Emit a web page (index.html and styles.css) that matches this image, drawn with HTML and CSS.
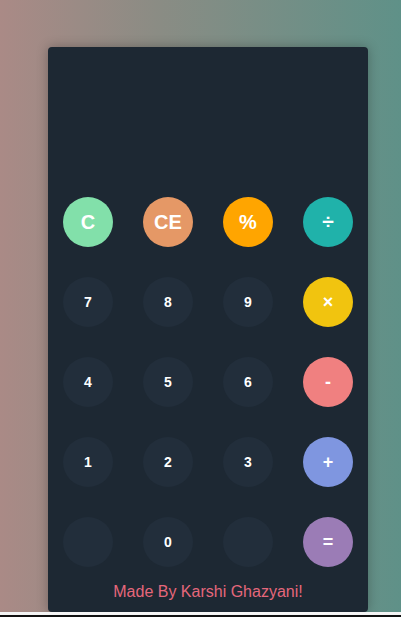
FILE: index.html
```html
<!DOCTYPE html>
<html>
<head>
<meta charset="utf-8">
<link rel="stylesheet" href="styles.css">
</head>
<body>
<div class="page">
  <div class="calc">
    <div class="display"></div>
    <div class="keys">
      <button class="key big c">C</button>
      <button class="key big ce">CE</button>
      <button class="key big pct">%</button>
      <button class="key op div">÷</button>
      <button class="key num">7</button>
      <button class="key num">8</button>
      <button class="key num">9</button>
      <button class="key op mul">×</button>
      <button class="key num">4</button>
      <button class="key num">5</button>
      <button class="key num">6</button>
      <button class="key op sub">-</button>
      <button class="key num">1</button>
      <button class="key num">2</button>
      <button class="key num">3</button>
      <button class="key op add">+</button>
      <button class="key num"></button>
      <button class="key num">0</button>
      <button class="key num"></button>
      <button class="key op eq">=</button>
    </div>
    <div class="credit">Made By Karshi Ghazyani!</div>
  </div>
</div>
<div class="strip"></div>
<div class="edge"></div>
</body>
</html>
```
FILE: styles.css
```css
html, body {
  margin: 0;
  padding: 0;
  background: #ffffff;
  overflow: hidden;
}
.page {
  height: 612px;
  background: linear-gradient(to right, #aa8a86 0%, #8a8c84 40%, #5f9188 100%);
  padding-top: 47px;
  padding-left: 48px;
  box-sizing: border-box;
}
.calc {
  width: 320px;
  height: 565px;
  box-sizing: border-box;
  background: #1d2833;
  border-radius: 4px;
  padding: 0 15px;
  box-shadow: 0 0 12px rgba(0, 0, 0, 0.28);
  display: flex;
  flex-direction: column;
}
.display {
  height: 150px;
  flex: none;
}
.keys {
  display: grid;
  grid-template-columns: repeat(4, 50px);
  grid-auto-rows: 50px;
  column-gap: 30px;
  row-gap: 30px;
}
.key {
  width: 50px;
  height: 50px;
  border: none;
  border-radius: 50%;
  padding: 0;
  color: #ffffff;
  font-family: "Liberation Sans", Arial, sans-serif;
  font-weight: bold;
  font-size: 14px;
  display: flex;
  align-items: center;
  justify-content: center;
}
.num { background: #222e3b; }
.big { font-size: 20px; }
.op { font-size: 18px; }
.c { background: #82e0aa; }
.ce { background: #e59866; }
.pct { background: #ffa500; }
.div { background: #20b2aa; font-size: 21px; }
.mul { background: #f1c40f; }
.sub { background: #f08080; }
.add { background: #7f96e0; }
.eq { background: #9b7cb6; }
.credit {
  margin-top: 16px;
  line-height: 18px;
  font-family: "Liberation Sans", Arial, sans-serif;
  font-size: 16px;
  color: #e5677b;
  text-align: center;
}
.strip {
  height: 3px;
  background: #f4f4f4;
}
.edge {
  height: 2px;
  background: #111111;
}
```
